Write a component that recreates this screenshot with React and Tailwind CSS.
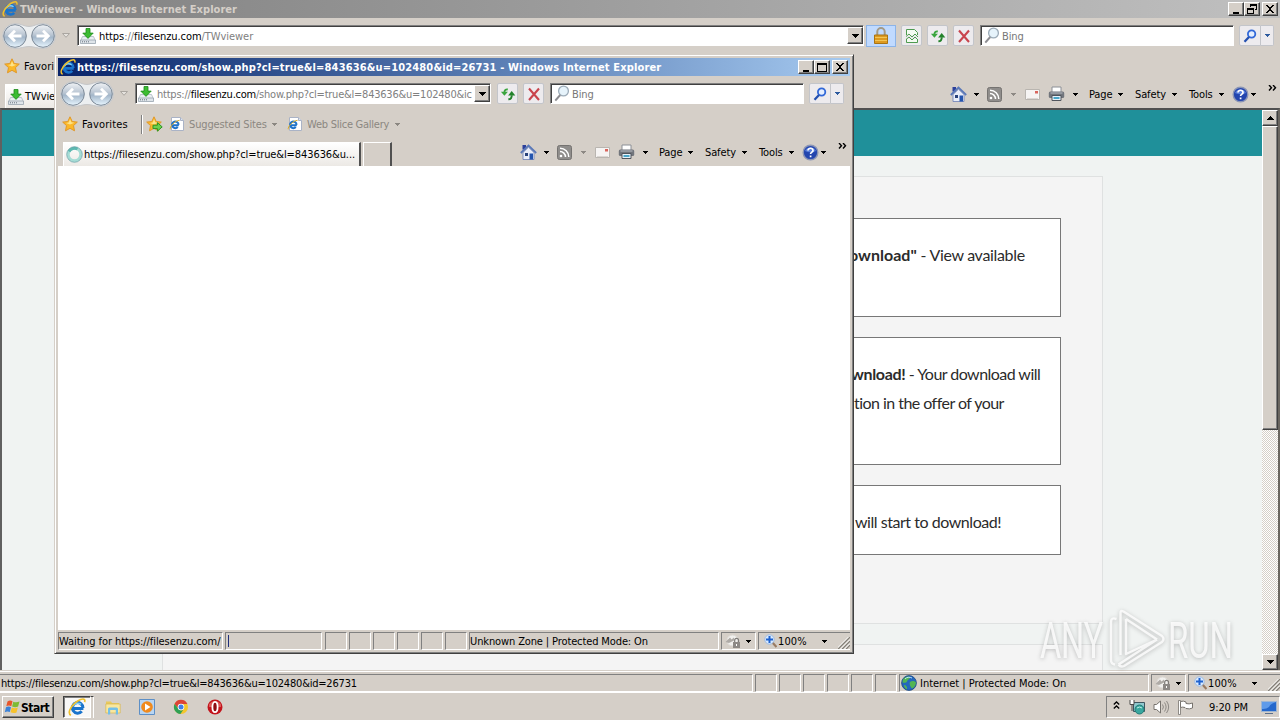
import React from "react";

const Caret = ({ className = "" }) => (
  <svg className={`shrink-0 ${className}`} width="5" height="3" viewBox="0 0 5 3" shapeRendering="crispEdges">
    <path d="M0 0h5v1H4v1H3v1H2V2H1V1H0z" fill="currentColor" />
  </svg>
);

const IeIcon = ({ size = 16 }) => (
  <svg className="shrink-0" width={size} height={size} viewBox="0 0 16 16">
    <path d="M13.700 9.300H4.600M13.300 8.900a4.700 4.700 0 1 0-1.100 2.900" fill="none" stroke="#1a74cc" strokeWidth="2.700" />
    <path d="M4.300 7.300a4.700 4.200 0 0 1 7.300-1.600" fill="none" stroke="#7fd0fa" strokeWidth="1.300" />
    <path d="M2.600 15.300C-.6 13.600 2 8.300 6 4.600 9.400 1.600 13.600-.1 14.700 1.500c.4.700.3 1.400 0 2.100" fill="none" stroke="#f0c02c" strokeWidth="1.500" />
  </svg>
);

const IePage = () => (
  <svg className="shrink-0" width="16" height="16" viewBox="0 0 16 16">
    <path d="M2.500 1.500h9l3 3v10h-12z" fill="#fff" stroke="#aab3c6" />
    <path d="M11.500 1.500v3h3" fill="#dbe3f0" stroke="#aab3c6" />
    <path d="M9.800 9.200H3.400M9.600 8.700a3.300 3.300 0 1 0-.8 2.300" fill="none" stroke="#1f73c9" strokeWidth="2" />
    <path d="M1.300 13.300C.4 11 5.800 4.500 10.600 4.300" fill="none" stroke="#dcae2b" />
  </svg>
);

const DownloadIcon = () => (
  <svg className="shrink-0" width="16" height="16" viewBox="0 0 16 16">
    <path d="M2.500 8.500h11l2 4.500H.5z" fill="#e9eef2" stroke="#aeb8c2" strokeWidth=".8" />
    <path d="M.5 12h15v3.500H.5z" fill="#dfe5ea" stroke="#98a3af" strokeWidth=".8" />
    <path d="M2 13.800h7" stroke="#66717d" strokeDasharray="1 1" />
    <path d="M6 .5h4v4.600h3.200L8 10.400 2.800 5.100H6z" fill="#3cbc32" stroke="#1d8a1b" strokeWidth=".8" />
  </svg>
);

const Star = ({ add }) => (
  <svg className="shrink-0" width="17" height="16" viewBox="0 0 17 16">
    <path
      d="M8 .8l2.200 4.700 5.100.6-3.800 3.500 1 5.200L8 12.300l-4.500 2.500 1-5.200L.7 6.100l5.100-.6z"
      fill="#fbb829"
      stroke="#e0982a"
    />
    <path d="M8 3l1.400 3.300 3 .4L8 8.500 4 6.900l2.700-.5z" fill="#fde38a" />
    {add && <path d="M7 9.200h4.400V6.600l4.800 4.300-4.800 4.300v-2.600H7z" fill="#6cd04e" stroke="#2c9523" />}
  </svg>
);

const Arrows = () => (
  <svg className="shrink-0" width="54" height="26" viewBox="0 0 54 26">
    <defs>
      <linearGradient id="orb" x1="0" y1="0" x2="0" y2="1">
        <stop offset="0" stopColor="#f0f3f6" />
        <stop offset=".45" stopColor="#b9c5d2" />
        <stop offset=".55" stopColor="#a3b6c9" />
        <stop offset="1" stopColor="#e8f6ff" />
      </linearGradient>
    </defs>
    <path d="M13 .5c6 0 9 3 14 3s8-3 14-3a12.400 12.400 0 0 1 0 25c-6 0-9-2-14-2s-8 2-14 2a12.400 12.400 0 0 1 0-25z" fill="#eceff1" stroke="#c5c6c8" />
    <circle cx="13" cy="13" r="11.300" fill="url(#orb)" stroke="#7b8896" />
    <circle cx="41" cy="13" r="11.300" fill="url(#orb)" stroke="#7b8896" />
    <path d="M19.500 13H8M13 7.700L7.700 13l5.300 5.300" fill="none" stroke="#fff" strokeWidth="2.800" />
    <path d="M34.500 13H46M41 7.700l5.300 5.300-5.300 5.300" fill="none" stroke="#fff" strokeWidth="2.800" />
  </svg>
);

const Refresh = () => (
  <svg width="16" height="16" viewBox="0 0 16 16">
    <path d="M7.800 3.500Q4.600 3 4.300 6.500" fill="none" stroke="#3aa53e" strokeWidth="1.800" />
    <path d="M.9 5.800h7L4.400 9.800z" fill="#3aa53e" />
    <path d="M8.400 13.300q3.400 0 3.300-4" fill="none" stroke="#23822b" strokeWidth="2" />
    <path d="M8.100 9.600h7.200L11.700 5z" fill="#23822b" />
  </svg>
);

const Stop = () => (
  <svg width="14" height="14" viewBox="0 0 14 14">
    <path d="M2 1.500l10 11.500M12 1.500L2 13" stroke="#c9444d" strokeWidth="2.100" fill="none" />
  </svg>
);

const TornPage = () => (
  <svg width="14" height="16" viewBox="0 0 14 16">
    <path d="M1.500 7V1.500h8l3 3V7M1.500 11v3.500h11V11" fill="#f4fbf2" stroke="#4e9b50" />
    <path d="M1 8.500l3-2.500 3 3 3-3 3 3M1 11.500l3-2.500 3 3 3-3 3 3" fill="none" stroke="#4e9b50" />
  </svg>
);

const Padlock = () => (
  <svg width="16" height="18" viewBox="0 0 16 18">
    <path d="M4.300 9V4.800a3.700 3.700 0 0 1 7.400 0V9" fill="none" stroke="#a39a86" strokeWidth="2" />
    <path d="M1.500 8h13v8.500h-13z" fill="#dd9a20" stroke="#a97312" />
    <path d="M2 10.500h12M2 13.500h12" stroke="#f3c555" />
  </svg>
);

const Glass = ({ blue }) =>
  blue ? (
    <svg width="14" height="14" viewBox="0 0 14 14">
      <circle cx="8.600" cy="5" r="3.700" fill="#e4eeff" stroke="#3168d8" strokeWidth="1.800" />
      <path d="M6 8l-4.500 4.700" stroke="#2450b0" strokeWidth="2.300" />
    </svg>
  ) : (
    <svg className="shrink-0" width="16" height="17" viewBox="0 0 16 17">
      <circle cx="9.500" cy="6" r="4.900" fill="#e6f3fb" stroke="#9cabb8" strokeWidth="1.300" />
      <path d="M6.200 10L1.300 15.700" stroke="#8d8d92" strokeWidth="2" />
    </svg>
  );

const Home = () => (
  <svg className="shrink-0" width="17" height="17" viewBox="0 0 17 17">
    <path d="M2.500 1H6v4.500H2.500z" fill="#2b3f9b" />
    <path d="M3 8.500l5.500-5.300L14 8.500v7H3z" fill="#e9edf8" stroke="#6b7fb5" strokeWidth=".8" />
    <path d="M.8 9l7.700-7.500L16.200 9" fill="none" stroke="#5a78b8" strokeWidth="1.800" />
    <path d="M5 9h3v3H5z" fill="#28417a" />
    <path d="M9.500 9.500H13v6H9.500z" fill="#2455ae" />
  </svg>
);

const Rss = () => (
  <svg className="shrink-0" width="15" height="15" viewBox="0 0 15 15">
    <rect x=".5" y=".5" width="14" height="14" rx="2" fill="#8f8d8b" stroke="#757371" />
    <circle cx="4" cy="11" r="1.300" fill="#fff" />
    <path d="M3 6.500a5.500 5.500 0 0 1 5.500 5.500M3 3.200a8.800 8.800 0 0 1 8.800 8.800" fill="none" stroke="#fff" strokeWidth="1.500" />
  </svg>
);

const Mail = () => (
  <svg className="shrink-0" width="15" height="11" viewBox="0 0 15 11">
    <path d="M.5.5h14v10H.5z" fill="#f6f4f3" stroke="#b9b5b0" />
    <path d="M2 9.500h11" stroke="#dbd7d3" />
    <path d="M10 2h3v2.500h-3z" fill="#d9655c" />
  </svg>
);

const Printer = () => (
  <svg className="shrink-0" width="17" height="16" viewBox="0 0 17 16">
    <path d="M4 1h9v6H4z" fill="#fff" stroke="#8b8f96" />
    <rect x=".8" y="5.500" width="15.400" height="6.500" rx="1.500" fill="#71757c" />
    <path d="M2.500 7h12" stroke="#b9bdc4" />
    <path d="M4 9.500h9v5H4z" fill="#e8f2fa" stroke="#50555d" />
    <path d="M5.500 12h6" stroke="#4aa6c9" strokeWidth="2" />
  </svg>
);

const Help = () => (
  <svg className="shrink-0" width="17" height="17" viewBox="0 0 17 17">
    <circle cx="8.500" cy="8.500" r="7.300" fill="#2345ae" stroke="#8b95b5" strokeWidth="1.400" />
    <path d="M3 7a5.800 5 0 0 1 11 0q-5.500 2.500-11 0z" fill="#587edb" />
    <path d="M6 6.600c0-3.200 5.200-3 5 0-.1 1.700-2.400 1.500-2.400 3.500M8.600 11.500v1.800" fill="none" stroke="#fff" strokeWidth="1.700" />
  </svg>
);

const ProtectIcon = () => (
  <svg className="shrink-0" width="16" height="15" viewBox="0 0 16 15">
    <circle cx="7.500" cy="6.500" r="5.500" fill="#f1f0ee" stroke="#dedad6" />
    <path d="M.5 8l4.500-4.500 1.500 2L9 3.500v3L4 9z" fill="#aeaaa6" />
    <path d="M9.700 8V6.200a1.900 1.900 0 0 1 3.800 0V8" fill="none" stroke="#7d7a77" strokeWidth="1.200" />
    <path d="M8 8h7v6H8z" fill="#8d8986" />
    <path d="M11 10h1v2h-1z" fill="#fff" />
  </svg>
);

const ZoomIcon = () => (
  <svg className="shrink-0" width="13" height="14" viewBox="0 0 13 14">
    <path d="M8 8l4.500 5" stroke="#9a7b62" strokeWidth="2.200" />
    <circle cx="5.500" cy="5.500" r="4.700" fill="#d9eaff" stroke="#9dbbe2" />
    <path d="M5.500 2v7M2 5.500h7" stroke="#1f62cf" strokeWidth="2" />
  </svg>
);

const Globe = () => (
  <svg className="shrink-0" width="16" height="16" viewBox="0 0 16 16">
    <circle cx="8" cy="8" r="7.400" fill="#2467bd" stroke="#1b467f" strokeWidth=".8" />
    <path d="M2 4.500C4 1.500 8 1 9.500 2.200 9 4 6.500 4 6 6.500 5.500 8 3 8 1.500 7.500zM9 7c2-1.500 5-1 6 .5-.3 3-2 5.500-4 6C9.500 12 8 9 9 7zM3 10c2 0 3.500 2 3 4.500C4.500 14 3 12 3 10z" fill="#52b552" />
    <path d="M4 4a5 4 0 0 1 7-1" stroke="#b8e2ff" fill="none" />
  </svg>
);

const Grip = () => (
  <svg className="shrink-0 self-end" width="12" height="12" viewBox="0 0 12 12">
    <path d="M0 12L12 0M4 12l8-8M8 12l4-4" stroke="#858179" strokeWidth="1.500" />
    <path d="M-1.500 12L12-1.500M2.500 12L12 2.500M6.500 12L12 6.500" stroke="#fff" />
  </svg>
);

const glyphs = {
  min: <path d="M3 9h6v2H3z" fill="#000" />,
  max: <path d="M1.500 2.500h9v8h-9zM1.500 3.500h9" fill="none" stroke="#000" />,
  restore: <path d="M4.500 1.500h6v5h-2M4.500 2.500h6M4.500 1v3M1.500 5.500h6v5h-6zM1.500 6.500h6" fill="none" stroke="#000" />,
  close: <path d="M2 2h2v1h1v1h2V3h1V2h2v1H9v1H8v1H7v2h1v1h1v1h1v1H8V9H7V8H5v1H4v1H2V9h1V8h1V7h1V5H4V4H3V3H2z" fill="#000" />,
};

const CaptionButton = ({ kind, className = "" }) => (
  <div
    className={`flex h-[14px] w-4 items-center justify-center border border-t-white border-l-white border-r-[#404040] border-b-[#404040] bg-[#d5cfc8] shadow-[inset_-1px_-1px_0_#808080] ${className}`}
  >
    <svg width="12" height="12" viewBox="0 0 12 12" shapeRendering="crispEdges">
      {glyphs[kind]}
    </svg>
  </div>
);

const ToolButton = ({ children, className = "w-[21px] rounded-[2px]" }) => (
  <div className={`flex h-[21px] shrink-0 items-center justify-center border border-[#c3c5ca] bg-[#edebee] ${className}`}>
    {children}
  </div>
);

const Menu = ({ label, className }) => (
  <div className={`flex shrink-0 items-center justify-between ${className}`}>
    <span className="pt-0.5">{label}</span>
    <Caret className="mt-px" />
  </div>
);

const CommandBar = () => (
  <div className="flex h-7 items-center">
    <Home />
    <Caret className="ml-[7px]" />
    <div className="ml-2"><Rss /></div>
    <Caret className="ml-[9px] text-[#8d8984]" />
    <div className="ml-[9px]"><Mail /></div>
    <div className="ml-2"><Printer /></div>
    <Caret className="ml-[8px]" />
    <Menu label="Page" className="ml-[11px] w-[34px]" />
    <Menu label="Safety" className="ml-[12px] w-[42px]" />
    <Menu label="Tools" className="ml-[12px] w-[35px]" />
    <div className="ml-[8px]"><Help /></div>
    <Caret className="ml-[2px]" />
    <svg className="mb-[13px] ml-[12px]" width="9" height="6" viewBox="0 0 9 6">
      <path d="M1 0l2.500 2.700L1 5.500M5 0l2.500 2.700L5 5.500" fill="none" stroke="#000" strokeWidth="1.400" />
    </svg>
    <div className="w-[3px]" />
  </div>
);

// Title bar, address row, favorites row and tab row: the same for both windows
const Chrome = ({ title, active, address, tab, secure }) => (
  <div className="flex h-[108px] shrink-0 flex-col bg-[#d5cfc8]">
    <div
      className={`flex h-[18px] shrink-0 items-center pr-0.5 pl-0.5 ${
        active
          ? "bg-linear-to-r from-[#0a246a] to-[#a6caf0] text-white"
          : "bg-linear-to-r from-[#808080] to-[#c0c0c0] text-[#d5cfc8]"
      }`}
    >
      <IeIcon />
      <span className={`flex-1 pt-0.5 whitespace-nowrap text-[11px] font-bold ${active ? "pl-px tracking-[0.15px]" : "pl-0.5 tracking-[0.04px]"}`}>
        {title}
      </span>
      <CaptionButton kind="min" />
      <CaptionButton kind={active ? "max" : "restore"} />
      <CaptionButton kind="close" className="ml-0.5" />
    </div>

    <div className="flex h-9 shrink-0 items-center pr-[6px] pb-px pl-0.5">
      <Arrows />
      <svg className="mr-[7px] ml-[6px] shrink-0" width="8" height="5" viewBox="0 0 8 5">
        <path d="M.5.500h7L4 4.300z" fill="#e5e2de" stroke="#aaa6a1" />
      </svg>
      <div className="flex h-[21px] min-w-0 flex-1 items-center border border-t-[#808080] border-l-[#808080] border-r-white border-b-white bg-white pl-0.5 shadow-[inset_1px_1px_0_#404040]">
        <DownloadIcon />
        <span className={`ml-[3px] min-w-0 flex-1 overflow-hidden pt-0.5 whitespace-nowrap text-[#808080] ${secure ? "tracking-[-0.06px]" : "tracking-[-0.23px]"}`}>
          {address}
        </span>
        <div className="flex h-[17px] w-4 shrink-0 items-center justify-center border border-t-white border-l-white border-r-[#404040] border-b-[#404040] bg-[#d5cfc8] shadow-[inset_-1px_-1px_0_#808080]">
          <svg width="7" height="4" viewBox="0 0 7 4" shapeRendering="crispEdges">
            <path d="M0 0h7v1H6v1H5v1H4v1H3V3H2V2H1V1H0z" />
          </svg>
        </div>
      </div>
      {secure ? (
        <>
          <div className="mr-[5px] ml-0.5 flex h-[22px] w-[30px] items-center justify-center border border-[#8cb4e8] bg-[#c0daff]">
            <Padlock />
          </div>
          <ToolButton><TornPage /></ToolButton>
          <div className="w-[5px]" />
        </>
      ) : (
        <div className="w-[6px]" />
      )}
      <ToolButton><Refresh /></ToolButton>
      <div className="w-[5px]" />
      <ToolButton><Stop /></ToolButton>
      <div className="ml-[6px] flex h-[21px] w-[254px] shrink-0 items-center border border-t-[#808080] border-l-[#808080] border-r-white border-b-white bg-white pl-[3px] text-[#777] shadow-[inset_1px_1px_0_#404040]">
        <Glass />
        <span className="ml-0.5 pt-0.5">Bing</span>
      </div>
      <ToolButton className="ml-[5px] w-[22px] rounded-l-[2px]"><Glass blue /></ToolButton>
      <ToolButton className="w-[13px] rounded-r-[2px] border-l-0 text-[#2d5a9e]"><Caret /></ToolButton>
    </div>

    <div className="flex h-[26px] shrink-0 items-center pb-0.5 pl-1">
      <Star />
      <span className="ml-[3px] w-[47px] pt-0.5 tracking-[0.12px] whitespace-nowrap">Favorites</span>
      <div className="ml-[12px] h-[19px] w-0.5 border-l border-[#808080] bg-white" />
      <div className="ml-[3px]"><Star add /></div>
      <div className="ml-[6px]"><IePage /></div>
      <Menu label="Suggested Sites" className="ml-[4px] w-[88px] tracking-[-0.14px] whitespace-nowrap text-[#8b8781]" />
      <div className="ml-[10px]"><IePage /></div>
      <Menu label="Web Slice Gallery" className="ml-[4px] w-[93px] tracking-[-0.25px] whitespace-nowrap text-[#8b8781]" />
    </div>

    <div className="flex h-7 shrink-0 items-end">
      <div className="ml-[5px] flex h-[24px] w-[298px] items-center border-t border-r-2 border-l border-t-white border-r-[#505050] border-l-white bg-linear-to-b from-white to-[#ece9e5] pl-0.5">
        {secure ? (
          <DownloadIcon />
        ) : (
          <svg className="shrink-0" width="17" height="17" viewBox="0 0 17 17">
            <circle cx="8.500" cy="8.500" r="6.300" fill="none" stroke="#a5dcd5" strokeWidth="3" />
            <path d="M3 5.500a6.300 6.300 0 0 1 8.500-2.500" fill="none" stroke="#5cb8b0" strokeWidth="3" />
            <circle cx="8.500" cy="8.500" r="7.800" fill="none" stroke="#6f9fa8" strokeWidth=".7" />
          </svg>
        )}
        <span className="ml-px tracking-[-0.09px] whitespace-nowrap">{tab}</span>
      </div>
      <div className="ml-0.5 h-[24px] w-[29px] border-t border-r-2 border-l border-t-white border-r-[#505050] border-l-white" />
      <div className="ml-auto"><CommandBar /></div>
    </div>
  </div>
);

const Panel = ({ className = "", children }) => (
  <div className={`flex h-[18px] shrink-0 items-center border border-t-[#808080] border-l-[#808080] border-r-white border-b-white whitespace-nowrap ${className}`}>
    {children}
  </div>
);

const StatusBar = ({ children, zone }) => (
  <div className="flex h-[21px] shrink-0 items-end gap-0.5 border-t border-white bg-[#d5cfc8]">
    {children}
    {[1, 2, 3, 4, 5].map((n) => (
      <Panel key={n} className="w-[22px]" />
    ))}
    <Panel className="w-[22px] border-r-transparent" />
    <Panel className="w-[250px]">{zone}</Panel>
    <Panel className="w-[35px] pl-[3px]">
      <ProtectIcon />
      <Caret className="ml-[5px]" />
    </Panel>
    <Panel className="w-[92px] border-r-0 pl-[5px]">
      <ZoomIcon />
      <span className="ml-px w-[32px] pt-px tracking-[0.1px]">100%</span>
      <Caret className="ml-[12px]" />
      <div className="ml-auto flex h-full"><Grip /></div>
    </Panel>
  </div>
);

const ScrollButton = ({ up }) => (
  <div className="flex h-4 w-4 shrink-0 items-center justify-center border border-t-white border-l-white border-r-[#404040] border-b-[#404040] bg-[#d5cfc8] shadow-[inset_-1px_-1px_0_#808080]">
    <svg className={up ? "rotate-180" : ""} width="7" height="4" viewBox="0 0 7 4" shapeRendering="crispEdges">
      <path d="M0 0h7v1H6v1H5v1H4v1H3V3H2V2H1V1H0z" />
    </svg>
  </div>
);

const Page = () => (
  <div className="flex h-[562px] shrink-0 border-t-2 border-r-2 border-l-2 border-t-[#505050] border-r-[#6a6660] border-l-[#606060] bg-[#f0f3f2]">
    <div className="flex min-w-0 flex-1 flex-col">
      <div className="h-[46px] shrink-0 bg-[#1f909a]" />
      <div className="mt-5 ml-[160px] flex h-[448px] w-[941px] shrink-0 flex-col items-end gap-5 border border-[#dfe1e1] bg-[#f4f4f4] pt-[41px] pr-[41px] font-['Lato',sans-serif] text-[16px] leading-[29px] tracking-[-0.5px] text-[#2b2b2b]">
        <div className="h-[99px] w-[858px] border border-[#777] bg-white pt-[21px] pl-[645px] tracking-[-0.32px] whitespace-nowrap">
          <b className="tracking-[0.02px]">ownload"</b> - View available
        </div>
        <div className="h-[128px] w-[858px] border border-[#777] bg-white pt-[21px] pl-[647px] tracking-[-0.54px] whitespace-nowrap">
          <p><b className="tracking-[-0.35px]">wnload!</b> - Your download will</p>
          <p className="pl-[3px]">tion in the offer of your</p>
        </div>
        <div className="h-[70px] w-[858px] border border-[#777] bg-white pt-[21px] pl-[651px] tracking-[-0.46px] whitespace-nowrap">
          will start to download!
        </div>
      </div>
      <div className="mt-5 ml-[160px] w-[941px] flex-1 border border-b-0 border-[#dfe1e1] bg-[#f4f4f4]" />
    </div>
    <div className="flex w-4 flex-col bg-[repeating-conic-gradient(#fff_0_25%,#d5cfc8_0_50%)] bg-size-[2px_2px]">
      <ScrollButton up />
      <div className="h-[304px] border border-t-white border-l-white border-r-[#404040] border-b-[#404040] bg-[#d5cfc8] shadow-[inset_-1px_-1px_0_#808080]" />
      <div className="flex-1" />
      <ScrollButton />
    </div>
  </div>
);

const Popup = () => (
  <div className="absolute top-[54px] left-[54px] flex h-[600px] w-[800px] flex-col border border-t-[#d5cfc8] border-l-[#d5cfc8] border-r-[#404040] border-b-[#404040] bg-[#d5cfc8] p-[3px] shadow-[inset_1px_1px_0_#fff,inset_-1px_-1px_0_#808080]">
    <Chrome
      active
      title="https://filesenzu.com/show.php?cl=true&l=843636&u=102480&id=26731 - Windows Internet Explorer"
      address={<>https://<span className="text-black">filesenzu.com</span>/show.php?cl=true&l=843636&u=102480&ic</>}
      tab="https://filesenzu.com/show.php?cl=true&l=843636&u..."
    />
    <div className="flex-1 bg-white" />
    <StatusBar zone={<span className="pt-px">Unknown Zone | Protected Mode: On</span>}>
      <Panel className="w-[165px] tracking-[-0.08px]"><span className="pt-px">Waiting for https://filesenzu.com/</span></Panel>
      <Panel className="mr-px min-w-0 flex-1 shrink pl-0.5">
        <div className="h-[12px] w-px bg-[#1f2f7a]" />
      </Panel>
    </StatusBar>
  </div>
);

const StartFlag = () => (
  <svg className="shrink-0" width="17" height="16" viewBox="0 0 17 16">
    <path d="M3.500 2.500Q6 .8 8.500 2.300L7.300 7.200Q4.800 6 2.300 7.300z" fill="#e8562a" />
    <path d="M9.300 2.700q2.800 1.300 6.200-.2l-1.400 5q-3 1.500-6-.1z" fill="#7dbb35" />
    <path d="M2 8.300q2.500-1.300 5-.1L5.800 13Q3.300 11.800.8 13.200z" fill="#3b82d8" />
    <path d="M7.800 8.500q3 1.500 6 .1l-1.300 4.900q-3 1.300-6-.2z" fill="#f7c22c" />
  </svg>
);

const Taskbar = () => (
  <div className="flex h-[28px] shrink-0 items-start border-t border-white bg-[#d5cfc8] pt-[3px] pl-0.5">
    <div className="flex h-[22px] w-[52px] items-center border border-t-white border-l-white border-r-[#404040] border-b-[#404040] pl-px shadow-[inset_-1px_-1px_0_#808080]">
      <StartFlag />
      <span className="pt-px text-[12px] font-bold tracking-[-0.5px]">Start</span>
    </div>
    <div className="ml-[9px] flex h-[22px] w-[28px] items-center justify-center border border-t-[#404040] border-l-[#404040] border-r-white border-b-white bg-[#f8f7f6] shadow-[inset_1px_1px_0_#808080]">
      <IeIcon size={18} />
    </div>
    <div className="h-[22px] w-[3px] border-t border-r border-t-[#404040] border-r-white" />
    <div className="ml-[11px] flex h-[22px] items-center gap-[18px]">
      <svg width="16" height="16" viewBox="0 0 16 16">
        <path d="M1 2.500h5l1 1.500h7v3H1z" fill="#e9c95b" />
        <path d="M.8 5h14.400v9H.8z" fill="#f9e79d" stroke="#d5b655" strokeWidth=".7" />
        <path d="M3 15.500V10q0-1.500 1.500-1.500h7Q13 8.500 13 10v5.500h-2.200V11H5.200v4.500z" fill="#73bfe8" />
      </svg>
      <svg width="16" height="16" viewBox="0 0 16 16">
        <path d="M.5.500h15v15H.5z" fill="#b8d5f2" stroke="#5d8fc6" />
        <circle cx="8" cy="8" r="5.800" fill="#f08a1d" />
        <path d="M6 4.500v7L11.500 8z" fill="#fff" />
      </svg>
      <svg width="16" height="16" viewBox="0 0 16 16">
        <circle cx="8" cy="8" r="7" fill="#f4c62c" />
        <path d="M1.500 5A7 7 0 0 1 14.400 5H8a3 3 0 0 0-2.700 4.300z" fill="#dc4437" />
        <path d="M1.600 4.900A7 7 0 0 0 7.400 15l3.100-4.600A3 3 0 0 1 5.300 9.500z" fill="#2fa055" />
        <circle cx="8" cy="8" r="3.300" fill="#fff" />
        <circle cx="8" cy="8" r="2.500" fill="#3f7fe8" />
      </svg>
      <svg width="16" height="16" viewBox="0 0 16 16">
        <circle cx="8" cy="8" r="7.500" fill="#c3141c" />
        <path d="M2 5q6-6 12 0v3H2z" fill="#dd5a58" />
        <ellipse cx="8" cy="8" rx="2.600" ry="5.200" fill="#8f0c12" stroke="#fff" strokeWidth="1.800" />
      </svg>
    </div>
    <div className="ml-auto flex h-[22px] w-[174px] items-center border border-t-[#808080] border-l-[#808080] border-r-white border-b-white pl-[6px]">
      <svg className="mb-1" width="7" height="8" viewBox="0 0 7 8">
        <path d="M.8 3.500l2.700-2.500 2.700 2.500M.8 7.500L3.500 5l2.700 2.500" fill="none" stroke="#000" strokeWidth="1.300" />
      </svg>
      <svg className="ml-[9px]" width="17" height="16" viewBox="0 0 17 16">
        <path d="M4.500 3.500h11v9h-11z" fill="#8fc9cf" stroke="#3e5560" />
        <path d="M1 1v4.500h4V1M3 5.500V12" fill="#fff" stroke="#4a4a4a" />
        <circle cx="10.500" cy="10.500" r="4.500" fill="#39a79f" stroke="#207a74" />
        <path d="M8 9q2.500-2 5 0" stroke="#c4efe7" fill="none" />
      </svg>
      <svg className="ml-[7px]" width="17" height="16" viewBox="0 0 17 16">
        <path d="M1 5.500h2.500L7.500 2v12L3.500 10.500H1z" fill="#fff" stroke="#77736e" />
        <path d="M9.500 5.500q1.800 2.500 0 5M11.500 3.500q3.200 4.500 0 9M13.500 2q4.300 6 0 12" fill="none" stroke="#8d8984" />
      </svg>
      <svg className="ml-[7px]" width="17" height="16" viewBox="0 0 17 16">
        <path d="M1.500 1.500h2v14h-2z" fill="#fff" stroke="#77736e" strokeWidth=".8" />
        <path d="M3.500 2.500q3-1 5.500.5v1.500q3 1 6.500-.5v5q-3 1.500-6.500.5L8 8.500q-2.500-.8-4.500 0z" fill="#fff" stroke="#77736e" />
      </svg>
      <span className="ml-[15px] pt-0.5 whitespace-nowrap">9:20 PM</span>
      <svg className="mr-0.5 ml-auto" width="16" height="15" viewBox="0 0 16 15">
        <path d="M.5 1.500h15v10H.5z" fill="#2568cc" stroke="#9fb6d2" />
        <path d="M1 2h14Q9 4 8 7 5 9.500 1 9z" fill="#5f9bea" />
        <path d="M4 13.500h8" stroke="#5a6f8c" />
      </svg>
    </div>
  </div>
);

const Watermark = () => (
  <div className="absolute top-[608px] left-[1040px] flex h-[64px] w-[195px] items-center text-white/80 drop-shadow-[0_1px_2px_rgba(90,90,90,0.45)]">
    <span className="w-[66px] origin-left scale-x-[0.65] pt-0.5 font-['Roboto',sans-serif] text-[50px] leading-none font-normal">ANY</span>
    <svg className="shrink-0" width="62" height="64" viewBox="0 0 62 64" fill="none" stroke="currentColor" strokeWidth="2.400" strokeLinejoin="round">
      <path d="M10.500 11Q5 9 5 14v38q0 4 4 4.500" />
      <path d="M14.500 5v42M14.500 5q0-3 3-1.500L56 28q3 3 0 6L18 58q-3.500 1.500-5.500-1.500M20 11v35L51 31.500M20 11l31 20.500M12.500 56.500L51 31.500" />
    </svg>
    <span className="origin-left scale-x-[0.66] pt-0.5 font-['Roboto',sans-serif] text-[50px] leading-none font-normal">RUN</span>
  </div>
);

const App = () => {
  return (
    <div className="relative flex h-[720px] w-[1280px] flex-col overflow-hidden bg-[#d5cfc8] font-['DejaVu_Sans_Condensed','DejaVu_Sans',sans-serif] text-[11px] leading-[14px] tracking-[-0.12px] text-black">
      <Chrome
        secure
        title="TWviewer - Windows Internet Explorer"
        address={<><span className="text-black">https</span>://<span className="text-black">filesenzu.com</span>/TWviewer</>}
        tab="TWviewer"
      />
      <Page />
      <div className="h-px shrink-0" />
      <StatusBar zone={<><div className="ml-px"><Globe /></div><span className="ml-[3px] pt-px tracking-[-0.02px]">Internet | Protected Mode: On</span></>}>
        <Panel className="min-w-0 flex-1 shrink border-l-0 pl-px tracking-[-0.2px]">
          <span className="pt-px">https://filesenzu.com/show.php?cl=true&l=843636&u=102480&id=26731</span>
        </Panel>
      </StatusBar>
      <Taskbar />
      <Popup />
      <Watermark />
    </div>
  );
};

export default App;
